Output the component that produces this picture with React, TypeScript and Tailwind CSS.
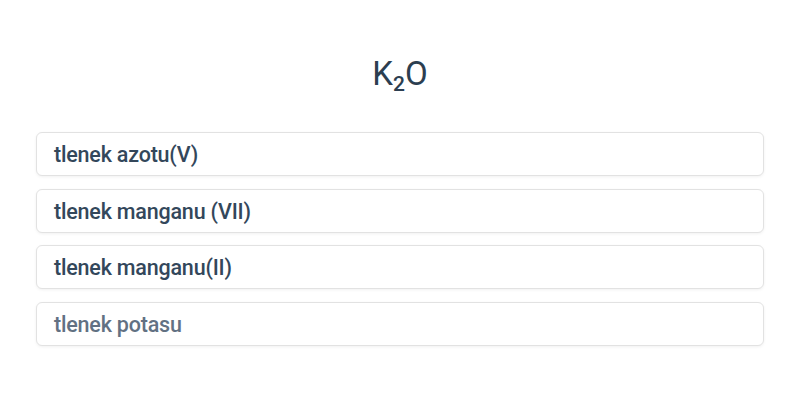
export default function App() {
  const options = [
    { label: "tlenek azotu(V)", muted: false },
    { label: "tlenek manganu (VII)", muted: false },
    { label: "tlenek manganu(II)", muted: false },
    { label: "tlenek potasu", muted: true },
  ];

  return (
    <div className="w-[800px] h-[400px] bg-white px-9 pt-[52px] font-['Roboto',sans-serif]">
      <h1 className="text-center text-[33px] leading-[44px] text-[#2c3e50] font-normal">
        K<sub className="text-[21px] align-baseline relative top-[6px] font-medium">2</sub>O
      </h1>
      <div className="mt-[36px] flex flex-col gap-[12.5px]">
        {options.map((o) => (
          <div
            key={o.label}
            className="h-11 flex items-center px-[17px] pt-[3px] rounded-md border border-[#e2e2e2] bg-white shadow-[0_1px_3px_rgba(0,0,0,0.06)]"
          >
            <span
              className={
                o.muted
                  ? "text-[21.5px] font-medium tracking-[-0.2px] text-[#627183]"
                  : "text-[21.5px] font-medium tracking-[-0.2px] text-[#33475b]"
              }
            >
              {o.label}
            </span>
          </div>
        ))}
      </div>
    </div>
  );
}
